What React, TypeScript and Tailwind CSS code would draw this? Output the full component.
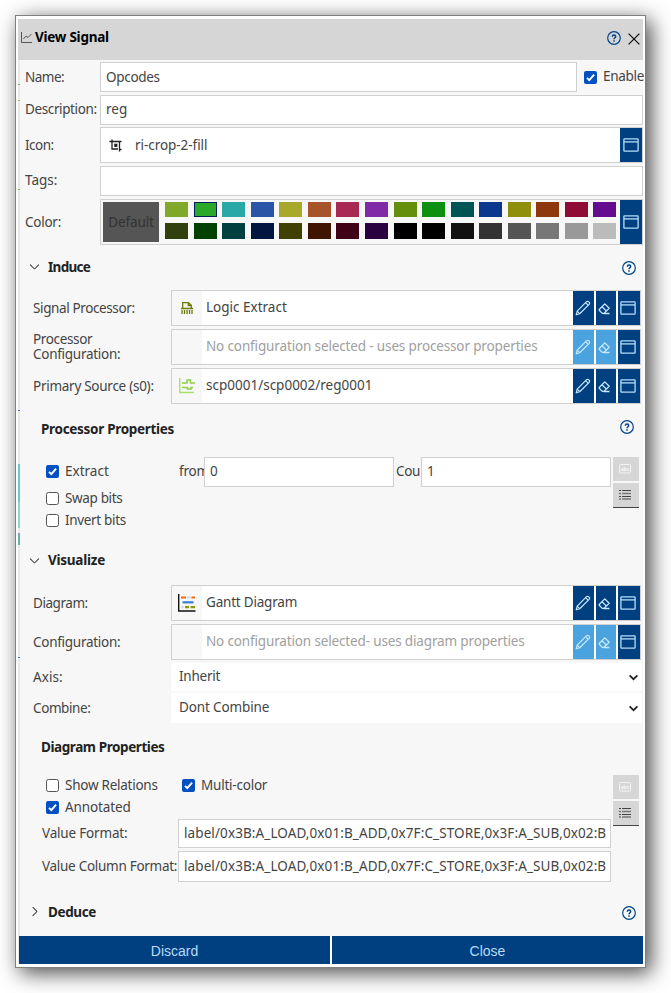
import React from "react";
import { VscChevronDown, VscChevronRight } from "react-icons/vsc";

function T({ children, className = "" }: { children: React.ReactNode; className?: string }) {
  return <span className={`pb-px whitespace-nowrap ${className}`}>{children}</span>;
}

function Help() {
  return (
    <svg className="size-[14px] shrink-0" viewBox="0 0 14 14" fill="none" stroke="#004586">
      <circle cx="7" cy="7" r="6.3" strokeWidth="1.2" />
      <path d="M5.300 5.700C5.300 4.600 6 4 7 4s1.700.6 1.700 1.500C8.700 6.700 7 6.800 7 8.200" strokeWidth="1.500" />
      <path d="M7 9.200v1.500" strokeWidth="1.500" />
    </svg>
  );
}

function WindowIcon() {
  return (
    <svg className="h-[14px] w-4 shrink-0" viewBox="0 0 16 14" fill="none" stroke="#b5dcfa" strokeWidth="1.300">
      <rect x="0.900" y="0.900" width="14.200" height="12.200" rx="0.600" />
      <path d="M1 3.900h14" />
    </svg>
  );
}

function PencilIcon() {
  return (
    <svg className="size-4 shrink-0" viewBox="0 0 16 16" fill="none" stroke="#c9e8ff" strokeWidth="1.200" strokeLinejoin="round">
      <path d="M1.200 14.800 2.200 11.200 11.300 1.900Q12.700.7 13.900 1.900 15.200 3.100 14.100 4.400L4.700 13.700Z" />
      <path d="M2.200 11.200 4.700 13.700M10.600 2.700l2.700 2.700" />
    </svg>
  );
}

function EraserIcon() {
  return (
    <svg className="size-[13px] shrink-0" viewBox="0 0 13 13" fill="none" stroke="#c9e8ff" strokeWidth="1.300" strokeLinejoin="round">
      <path d="M1.200 7.500 6.800 1.900 11.200 6.300 6 11.400H4.300L1.200 8.300Z" />
      <path d="M4 4.700 8.400 9.100M5.500 11.500H11.500" />
    </svg>
  );
}

function Check({ on, label, className = "" }: { on?: boolean; label: string; className?: string }) {
  return (
    <div className="flex items-center">
      {on ? (
        <svg className="size-[13px] shrink-0" viewBox="0 0 13 13">
          <rect width="13" height="13" rx="2" fill="#0550c0" />
          <path d="M3 6.900 5.300 9.200 10.100 3.600" fill="none" stroke="#fff" strokeWidth="1.900" />
        </svg>
      ) : (
        <span className="size-[13px] shrink-0 rounded-[2.500px] border border-[#555] bg-white" />
      )}
      <T className={`ml-[6px] ${className}`}>{label}</T>
    </div>
  );
}

function Picker({ icon, text, muted, cls = "" }: { icon?: React.ReactNode; text: string; muted?: boolean; cls?: string }) {
  const small = muted ? "bg-[#4aa3df]" : "bg-[#004080]";
  return (
    <div className="flex h-9 w-[470px] border border-[#d0d0d0] bg-white">
      <div className="flex w-[30px] items-center justify-center bg-[#f7f7f7]">{icon}</div>
      <div className={`flex flex-1 items-center pl-1 ${muted ? "text-[#a0a0a0]" : ""}`}>
        <T className={cls}>{text}</T>
      </div>
      <div className="flex gap-[2px]">
        <div className={`flex w-[21px] items-center justify-center pr-[2px] ${small}`}><PencilIcon /></div>
        <div className={`flex w-[20px] items-center justify-center pr-[3px] ${small}`}><EraserIcon /></div>
        <div className="flex w-[22px] items-center justify-center bg-[#004080] pr-[2px]"><WindowIcon /></div>
      </div>
    </div>
  );
}

function Row({ label, h, children }: { label: React.ReactNode; h: string; children: React.ReactNode }) {
  return (
    <div className={`flex items-center ${h}`}>
      <div className="w-[151px] shrink-0 pl-[13px] leading-[15px]">{label}</div>
      {children}
    </div>
  );
}

function Select({ text, h, cls = "" }: { text: string; h: string; cls?: string }) {
  return (
    <div className={`flex w-[471px] items-center justify-between bg-white pr-1 pl-2 ${h}`}>
      <T className={cls}>{text}</T>
      <svg className="h-[7px] w-[9px]" viewBox="0 0 9 7" fill="none" stroke="#222" strokeWidth="1.700">
        <path d="M.6 1.300 4.500 5.200 8.400 1.300" />
      </svg>
    </div>
  );
}

function SideButtons() {
  return (
    <div className="ml-[2px] w-[26px]">
      <div className="flex h-6 items-center justify-center bg-[#d6d6d6] pr-[2px]">
        <svg className="h-[10px] w-3" viewBox="0 0 12 10">
          <rect x=".5" y=".5" width="11" height="8.500" rx="1" fill="none" stroke="#f2f2f2" />
          <text x="6" y="6.700" textAnchor="middle" fontSize="5" fontWeight="bold" fill="#f8f8f8">abc</text>
        </svg>
      </div>
      <div className="mt-[2px] flex h-[25px] items-center justify-center border-b border-[#444] bg-[#d6d6d6] pr-[2px]">
        <svg className="h-[10px] w-3" viewBox="0 0 12 10">
          <path d="M0 .5h2M3 .5h9M0 6.500h2M3 6.500h9" stroke="#444" />
          <path d="M0 3.500h2M3 3.500h9M0 9h2M3 9h9" stroke="#777" strokeWidth="1.500" />
        </svg>
      </div>
    </div>
  );
}

function Section({ open, title, help, cls = "" }: { open?: boolean; title: string; help?: boolean; cls?: string }) {
  return (
    <div className="flex h-5 items-center pr-[7px] pl-[7px] font-bold text-[#222]">
      {open ? <VscChevronDown className="mb-px size-[15px]" /> : <VscChevronRight className="mb-px size-[15px]" />}
      <T className={`ml-[6px] flex-1 ${cls}`}>{title}</T>
      {help && <span className="pt-[2px]"><Help /></span>}
    </div>
  );
}

const top = ["#80a82a", "#2aa82a", "#2aa8a8", "#2a54a8", "#a8a82a", "#a8542a", "#a82a54", "#802aa8", "#648f0c", "#0f8f0f", "#005454", "#0c378f", "#8f8f0c", "#8f370c", "#8f0c37", "#640c8f"];
const bottom = ["#324010", "#004000", "#004040", "#001540", "#404000", "#401500", "#400015", "#2b0040", "#000000", "#000000", "#111111", "#333333", "#555555", "#777777", "#999999", "#bbbbbb"];

export default function App() {
  const box = "border border-[#d0d0d0] bg-white flex items-center overflow-hidden shrink-0";
  const format = "label/0x3B:A_LOAD,0x01:B_ADD,0x7F:C_STORE,0x3F:A_SUB,0x02:B";
  return (
    <div className="h-[993px] w-[671px] overflow-hidden bg-white pt-[15px] pl-[15px] font-['Noto_Sans',sans-serif] text-[13.5px] text-[#444]">
      <div className="h-[953px] w-[631px] border border-[#808080] bg-white px-[2px] py-[3px] shadow-[5px_5px_20px_rgba(0,0,0,0.72)]">
        <div className="flex h-[41px] items-center bg-[#d6d6d6] pr-[3px] pl-[3px] text-black">
          <svg className="mb-[4px] size-[11px]" viewBox="0 0 11 11" fill="none" stroke="#555">
            <path d="M.5 0v10.500H11M2.500 7 5 4l2 1.500L10.500 2" />
          </svg>
          <T className="mb-[3px] ml-[3px] flex-1 font-bold tracking-[-0.25px]">View Signal</T>
          <span className="mb-1"><Help /></span>
          <svg className="mb-[2px] ml-[7px] size-[12px]" viewBox="0 0 12 12" stroke="#111" strokeWidth="1.300">
            <path d="M.6.600 11.400 11.400M11.400.6.600 11.400" />
          </svg>
        </div>
        <div className="flex h-[904px]">
          <div className="flex w-[2px] shrink-0 flex-col bg-[#e8e8e8]">
            <div className="mt-[24px] h-px bg-[#8fb83a]" />
            <div className="mt-[15px] h-px bg-[#b8b83a]" />
            <div className="mt-[88px] h-px bg-[#8fb83a]" />
            <div className="mt-[220px] h-px bg-[#4a6ad0]" />
            <div className="mt-[53px] h-[38px] bg-[#6cc8c8]" />
            <div className="h-[26px] bg-[#8fd2d2]" />
            <div className="mt-[5px] h-[12px] bg-[#6aaeae]" />
            <div className="mt-[112px] h-px bg-[#4a7ad0]" />
          </div>
          <div className="flex min-w-0 flex-1 flex-col bg-[#f7f7f7]">
            <div className="h-[186px] pt-[2px]">
              <div className="flex h-[30px] items-center">
                <T className="w-[80px] shrink-0 pt-px pl-[5px] tracking-[-0.5px]">Name:</T>
                <div className={`${box} h-[30px] w-[477px] pl-[5px]`}><T className="pt-px tracking-[-0.3px]">Opcodes</T></div>
                <div className="ml-[7px]"><Check on label="Enable" className="tracking-[-0.3px]" /></div>
              </div>
              <div className="mt-[3px] flex h-[30px] items-center">
                <T className="w-[80px] shrink-0 pl-[5px] tracking-[-0.38px]">Description:</T>
                <div className={`${box} h-[30px] w-[543px] pl-[5px]`}><T>reg</T></div>
              </div>
              <div className="mt-[2px] flex h-9 items-center">
                <T className="w-[80px] shrink-0 pt-px pl-[5px] tracking-[-0.5px]">Icon:</T>
                <div className={`${box} h-9 w-[543px] pl-2`}>
                  <svg className="size-[13px]" viewBox="0 0 13 13" fill="none" stroke="#222" strokeWidth="1.300">
                    <path d="M3 .5v9.500h6M.5 2.500h12M10.500 2.500V12.500M10 10.500h2.500" />
                    <rect x="5.200" y="4.700" width="3.200" height="3.200" fill="#222" stroke="none" />
                  </svg>
                  <T className="ml-[13px] flex-1 pt-px tracking-[-0.05px]">ri-crop-2-fill</T>
                  <div className="flex h-full w-[22px] items-center justify-center bg-[#004080] pr-px"><WindowIcon /></div>
                </div>
              </div>
              <div className="mt-[3px] flex h-[30px] items-center">
                <T className="w-[80px] shrink-0 pl-[5px]">Tags:</T>
                <div className={`${box} h-[30px] w-[543px]`} />
              </div>
              <div className="mt-[3px] flex h-[46px] items-center">
                <T className="w-[80px] shrink-0 pt-px pl-[5px] tracking-[-0.25px]">Color:</T>
                <div className="flex h-[46px] w-[543px] shrink-0 items-center border border-[#d0d0d0]">
                  <div className="ml-[2px] flex h-10 w-14 shrink-0 items-center justify-center bg-[#555]"><T className="pt-px tracking-[-0.1px] text-[#333]">Default</T></div>
                  <div className="-mr-[2px] mb-[3px] ml-[6px] grid w-[457px] shrink-0 grid-cols-16 gap-y-[6px]">
                    {top.map((c, i) => (
                      <div key={c} className={`h-[15.500px] w-[23px] ${i === 1 ? "border border-[#001f60]" : ""}`} style={{ backgroundColor: c }} />
                    ))}
                    {bottom.map((c, i) => (
                      <div key={i} className="h-4 w-[23px]" style={{ backgroundColor: c }} />
                    ))}
                  </div>
                  <div className="flex h-full w-[22px] shrink-0 items-center justify-center bg-[#004080] pr-px"><WindowIcon /></div>
                </div>
              </div>
            </div>
            <div className="mt-[11px]"><Section open title="Induce" help cls="pt-px tracking-[-0.7px]" /></div>
            <div className="mt-[13px] flex flex-col gap-[3px]">
              <Row h="h-9" label={<T className="tracking-[-0.38px]">Signal Processor:</T>}>
                <Picker text="Logic Extract" icon={
                  <svg className="size-3" viewBox="0 0 12 12" fill="none" stroke="#6b7a00" strokeWidth="1.300">
                    <path d="M1.700 6V.7H7.500L10.300 3.300V6M7.300.7V3.500H10.300M0 6.500H12M1 8v4M3.500 8v4M6 8v4M8.500 8v4M11 8v4" />
                  </svg>} />
              </Row>
              <Row h="h-9" label={<><T className="tracking-[-0.35px]">Processor</T><br /><T className="tracking-[-0.27px]">Configuration:</T></>}>
                <Picker muted text="No configuration selected - uses processor properties" cls="tracking-[-0.14px]" />
              </Row>
              <Row h="h-9" label={<T className="tracking-[-0.27px]">Primary Source (s0):</T>}>
                <Picker text="scp0001/scp0002/reg0001" icon={
                  <svg className="size-4" viewBox="0 0 16 16" fill="none" stroke="#a8e070" strokeWidth="1.400">
                    <path d="M.8 0v14.500H15" />
                    <path d="M3 5H8V2H11.500V5H16M3 9.500H8.500V11H12V9.500H14" stroke="#8fd14a" strokeWidth="1.500" />
                  </svg>} />
              </Row>
            </div>
            <div className="mt-[16px] flex h-5 items-center pr-[9px] pl-[21px]">
              <T className="flex-1 font-bold tracking-[-0.3px] text-[#222]">Processor Properties</T>
              <span className="mb-[6px]"><Help /></span>
            </div>
            <div className="mt-[17px] flex h-[90px] pl-[26px]">
              <div className="w-[133px] pt-[4px]">
                <Check on label="Extract" />
                <div className="mt-[6px]"><Check label="Swap bits" className="tracking-[-0.35px]" /></div>
                <div><Check label="Invert bits" className="tracking-[-0.33px]" /></div>
              </div>
              <div className="flex h-[30px] items-center">
                <div className="flex w-[25px] overflow-hidden"><T className="tracking-[-0.2px]">from</T></div>
                <div className={`${box} h-[30px] w-[190px] pl-[5px]`}><T>0</T></div>
                <div className="ml-[2px] flex w-[25px] overflow-hidden"><T className="tracking-[-0.3px]">Cou</T></div>
                <div className={`${box} h-[30px] w-[190px] pl-[5px]`}><T>1</T></div>
              </div>
              <SideButtons />
            </div>
            <div className="mt-[4px]"><Section open title="Visualize" cls="tracking-[-0.25px]" /></div>
            <div className="mt-[14px] flex flex-col gap-[3px]">
              <Row h="h-9" label={<T className="tracking-[-0.45px]">Diagram:</T>}>
                <Picker text="Gantt Diagram" cls="tracking-[-0.2px]" icon={
                  <svg className="size-[18px]" viewBox="0 0 18 18" fill="none" strokeWidth="2.200">
                    <path d="M.7 0v17H17.500" stroke="#111" strokeWidth="1.400" />
                    <path d="M3 3.500H8M13.500 3.500H17" stroke="#f26a0c" />
                    <path d="M8.500 3.500h4.500" stroke="#dcdcdc" />
                    <path d="M4.500 8.300H15.500" stroke="#3a7fd0" />
                    <path d="M3 13.200H6" stroke="#dcdcdc" />
                    <path d="M7 13.200H11M12.500 13.200H17" stroke="#8a9a0c" />
                  </svg>} />
              </Row>
              <Row h="h-9" label={<T className="tracking-[-0.27px]">Configuration:</T>}>
                <Picker muted text="No configuration selected- uses diagram properties" cls="tracking-[-0.15px]" />
              </Row>
              <Row h="h-7" label={<T className="tracking-[0.1px]">Axis:</T>}><Select h="h-7" text="Inherit" cls="tracking-[-0.25px]" /></Row>
            </div>
            <div className="mt-[2px]"><Row h="h-[30px]" label={<T className="tracking-[-0.4px]">Combine:</T>}><Select h="h-[30px]" text="Dont Combine" cls="tracking-[-0.13px]" /></Row></div>
            <div className="mt-[14px] flex h-5 items-center pl-[21px] font-bold text-[#222]"><T className="pt-px tracking-[-0.42px]">Diagram Properties</T></div>
            <div className="mt-[18px] flex h-[107px] pl-[22px]">
              <div className="w-[569px]">
                <div className="flex h-[21px] items-center pl-1">
                  <div className="w-[136px]"><Check label="Show Relations" className="tracking-[-0.25px]" /></div>
                  <Check on label="Multi-color" className="tracking-[-0.22px]" />
                </div>
                <div className="flex h-[23px] items-center pl-1"><Check on label="Annotated" className="tracking-[-0.1px]" /></div>
                <div className="flex h-[29px] items-center">
                  <T className="w-[136px] shrink-0 tracking-[-0.18px]">Value Format:</T>
                  <div className={`${box} h-[29px] w-[433px] pl-[5px]`}><T className="tracking-[0.1px]">{format}</T></div>
                </div>
                <div className="mt-[3px] flex h-[31px] items-center">
                  <T className="w-[136px] shrink-0 tracking-[-0.28px]">Value Column Format:</T>
                  <div className={`${box} h-[31px] w-[433px] pl-[5px]`}><T className="tracking-[0.1px]">{format}</T></div>
                </div>
              </div>
              <SideButtons />
            </div>
            <div className="mt-[20px]"><Section title="Deduce" help cls="pt-px tracking-[-0.4px]" /></div>
            <div className="mt-auto -ml-px flex h-[28px] gap-[2px] bg-white font-['Liberation_Sans',sans-serif] text-[14px] text-[#b5dcfa]">
              <div className="flex flex-1 items-center justify-center bg-[#004080] pt-[2px]">Discard</div>
              <div className="flex flex-1 items-center justify-center bg-[#004080] pt-[2px]">Close</div>
            </div>
          </div>
        </div>
      </div>
    </div>
  );
}
